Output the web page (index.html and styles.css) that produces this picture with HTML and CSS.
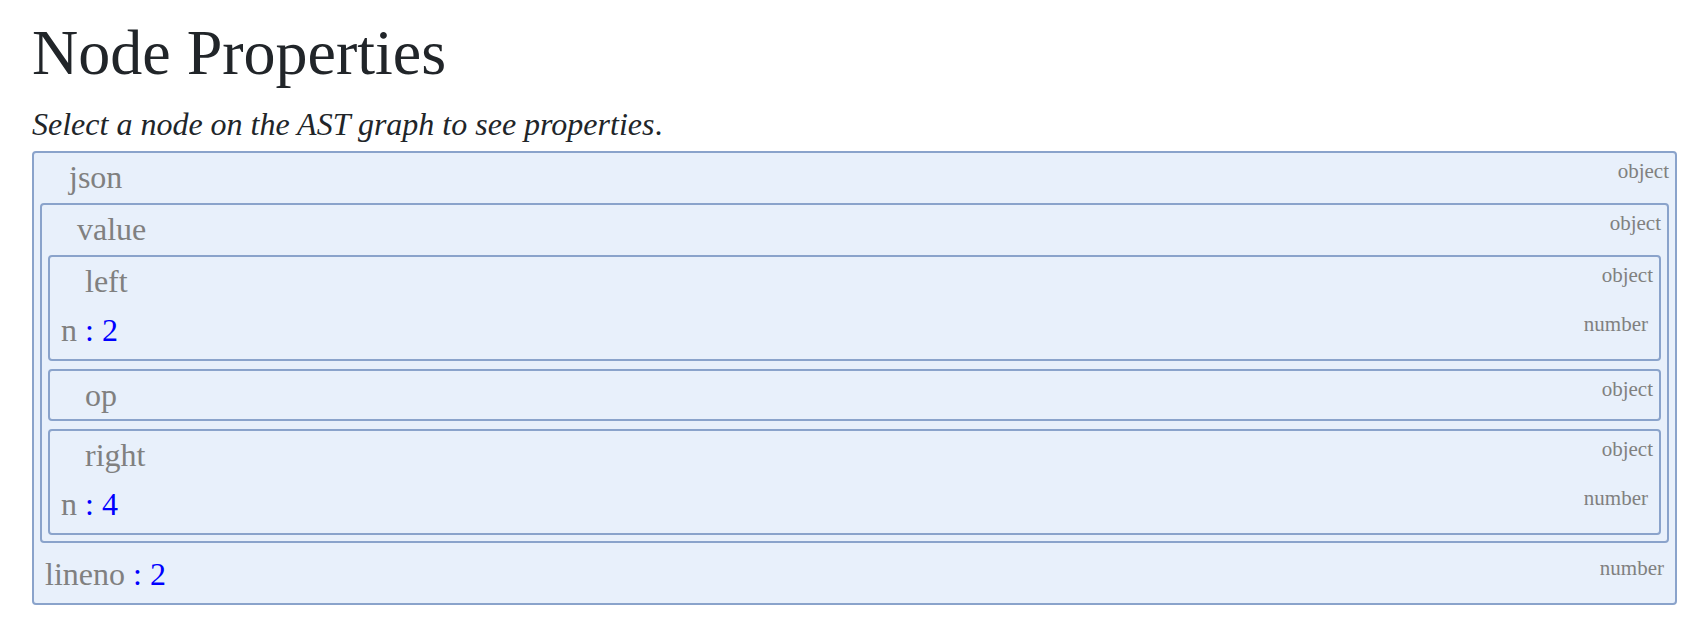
FILE: index.html
```html
<!DOCTYPE html>
<html lang="en">
<head>
<meta charset="utf-8">
<title>Node Properties</title>
<link rel="stylesheet" href="styles.css">
</head>
<body>
<main class="page">
  <h1 class="title">Node Properties</h1>
  <p class="hint"><em>Select a node on the AST graph to see properties</em>.</p>
  <div class="node">
    <div class="node-head"><span class="key">json</span><span class="type">object</span></div>
    <div class="node">
      <div class="node-head"><span class="key">value</span><span class="type">object</span></div>
      <div class="node">
        <div class="node-head"><span class="key">left</span><span class="type">object</span></div>
        <div class="prop"><span class="prop-main"><span class="prop-name">n</span><span class="prop-val"> : 2</span></span><span class="type">number</span></div>
      </div>
      <div class="node">
        <div class="node-head"><span class="key">op</span><span class="type">object</span></div>
      </div>
      <div class="node">
        <div class="node-head"><span class="key">right</span><span class="type">object</span></div>
        <div class="prop"><span class="prop-main"><span class="prop-name">n</span><span class="prop-val"> : 4</span></span><span class="type">number</span></div>
      </div>
    </div>
    <div class="prop"><span class="prop-main"><span class="prop-name">lineno</span><span class="prop-val"> : 2</span></span><span class="type">number</span></div>
  </div>
</main>
</body>
</html>
```

FILE: styles.css
```css
html, body {
  margin: 0;
  padding: 0;
  background: #ffffff;
}

body {
  font-family: "Liberation Serif", "Times New Roman", serif;
  color: #212529;
}

.page {
  padding: 0 31px 0 32px;
}

.title {
  margin: 16px 0 0;
  font-size: 64px;
  line-height: 74px;
  font-weight: normal;
  color: #212529;
}

.hint {
  margin: 16px 0 9px;
  font-size: 32px;
  line-height: 36px;
  color: #212529;
}

.node {
  border: 2px solid #8aa3cb;
  border-radius: 4px;
  background: #e8f0fb;
  padding: 6px;
}

.node .node,
.node .prop {
  margin-top: 8px;
}

.node-head {
  display: flex;
  justify-content: space-between;
  align-items: flex-start;
  line-height: 36px;
}

.key {
  padding-left: 29px;
  font-size: 32px;
  color: #808080;
}

.type {
  font-size: 21px;
  line-height: 24px;
  color: #808080;
}

.prop {
  display: flex;
  justify-content: space-between;
  align-items: flex-start;
  padding: 5px;
  line-height: 36px;
  font-size: 32px;
}

.prop-name {
  color: #808080;
}

.prop-val {
  color: #0000ff;
  white-space: pre;
}
```
